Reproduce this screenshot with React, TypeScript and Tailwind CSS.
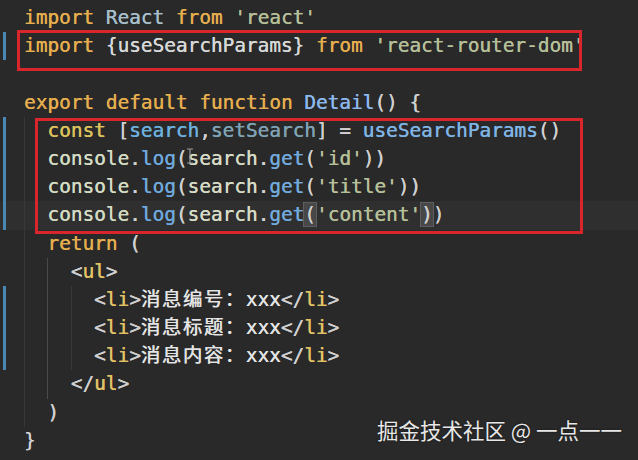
type Tok = [string, string];

const KW = "#e5ae4e";
const STR = "#b5bf98";
const PUN = "#cfcfcf";
const TAG = "#e2c267";
const FN = "#7fb4e4";

type Line = { indent: number; toks: Tok[]; bar?: boolean; active?: boolean };

const lines: Line[] = [
  { indent: 0, toks: [["import", KW], [" ", PUN], ["React", "#a6bfcb"], [" ", PUN], ["from", KW], [" ", PUN], ["'react'", STR]] },
  {
    indent: 0,
    bar: true,
    toks: [["import", KW], [" ", PUN], ["{useSearchParams}", "#d6d8d8"], [" ", PUN], ["from", KW], [" ", PUN], ["'react-router-dom'", STR]],
  },
  { indent: 0, toks: [] },
  {
    indent: 0,
    toks: [["export", KW], [" ", PUN], ["default", KW], [" ", PUN], ["function", KW], [" ", PUN], ["Detail", "#8cb8ec"], ["() {", PUN]],
  },
  {
    indent: 2,
    bar: true,
    toks: [
      ["const", "#dcc25c"],
      [" [", PUN],
      ["search", "#6cb0dd"],
      [",", PUN],
      ["setSearch", "#7fa3b5"],
      ["] = ", PUN],
      ["useSearchParams", FN],
      ["()", PUN],
    ],
  },
  {
    indent: 2,
    bar: true,
    toks: [["console", "#d3dbc3"], [".", PUN], ["log", "#6fa8dc"], ["(", PUN], ["search", "#d6dcc6"], [".", PUN], ["get", "#72aadd"], ["(", PUN], ["'id'", STR], ["))", PUN]],
  },
  {
    indent: 2,
    bar: true,
    toks: [["console", "#d3dbc3"], [".", PUN], ["log", "#6fa8dc"], ["(", PUN], ["search", "#d6dcc6"], [".", PUN], ["get", "#72aadd"], ["(", PUN], ["'title'", STR], ["))", PUN]],
  },
  {
    indent: 2,
    bar: true,
    active: true,
    toks: [["console", "#d3dbc3"], [".", PUN], ["log", "#6fa8dc"], ["(", PUN], ["search", "#d6dcc6"], [".", PUN], ["get", "#72aadd"], ["[(]", PUN], ["'content'", STR], ["[)]", PUN], [")", PUN]],
  },
  { indent: 2, toks: [["return", KW], [" (", PUN]] },
  { indent: 4, toks: [["<", PUN], ["ul", TAG], [">", PUN]] },
  { indent: 6, bar: true, toks: [["<", PUN], ["li", TAG], [">", PUN], ["消息编号：", "#e4e4e4"], ["xxx", "#e4e4e4"], ["</", PUN], ["li", TAG], [">", PUN]] },
  { indent: 6, bar: true, toks: [["<", PUN], ["li", TAG], [">", PUN], ["消息标题：", "#e4e4e4"], ["xxx", "#e4e4e4"], ["</", PUN], ["li", TAG], [">", PUN]] },
  { indent: 6, bar: true, toks: [["<", PUN], ["li", TAG], [">", PUN], ["消息内容：", "#e4e4e4"], ["xxx", "#e4e4e4"], ["</", PUN], ["li", TAG], [">", PUN]] },
  { indent: 4, toks: [["</", PUN], ["ul", TAG], [">", PUN]] },
  { indent: 2, toks: [[")", PUN]] },
  { indent: 0, toks: [["}", PUN]] },
];

const isCjk = (s: string) => /[\u3000-\u9fff\uff00-\uffef]/.test(s);

function Token({ t }: { t: Tok }) {
  const [text, color] = t;
  if (text === "[(]" || text === "[)]") {
    return (
      <span className="bg-[#474747] outline outline-1 outline-[#5e5e5e]" style={{ color }}>
        {text[1]}
      </span>
    );
  }
  return (
    <span className={isCjk(text) ? "tracking-[1.6px]" : ""} style={{ color }}>
      {text}
    </span>
  );
}

function CodeLine({ line, idx }: { line: Line; idx: number }) {
  const guides = Math.floor(line.indent / 2);
  return (
    <div className={`flex h-[28.2px] items-stretch ${line.active ? "bg-[#2f2f2f]" : ""}`}>
      <div className="w-[24px] shrink-0 pl-[3px]">
        {line.bar && <div className="h-full w-[3px] bg-[#4a87b5]" />}
      </div>
      <div className="flex items-stretch">
        {Array.from({ length: guides }).map((_, g) => (
          <span
            key={g}
            className={`w-[23.36px] border-l ${g === 1 && idx >= 9 ? "border-[#4a4a4a]" : "border-[#383838]"}`}
          />
        ))}
      </div>
      <div className="whitespace-pre leading-[28.2px] [text-shadow:0.35px_0_0_currentColor]">
        {line.toks.map((t, i) => (
          <Token key={i} t={t} />
        ))}
      </div>
    </div>
  );
}

export default function App() {
  return (
    <div className="relative h-[460px] w-[638px] overflow-hidden bg-[#292929]">
      <div
        className="flex flex-col pt-[4px] text-[19.4px]"
        style={{ fontFamily: '"DejaVu Sans Mono", "Noto Sans CJK SC", monospace' }}
      >
        {lines.map((l, i) => (
          <CodeLine key={i} line={l} idx={i} />
        ))}
      </div>

      {/* highlight boxes */}
      <div className="absolute left-[17px] top-[30px] h-[41px] w-[565px] border-[3px] border-[#d8262c]" />
      <div className="absolute left-[35px] top-[118px] h-[116px] w-[548px] border-[3px] border-[#d8262c]" />

      {/* mouse text cursor */}
      <svg className="absolute left-[186px] top-[148px]" width="8" height="16" viewBox="0 0 8 16">
        <path d="M1 1h6M4 1v14M1 15h6" stroke="#9a9a9a" strokeWidth="1.2" fill="none" />
      </svg>

      <div
        className="absolute left-[377px] top-[414px] text-[21.5px] text-[#e8e8e8] [text-shadow:0_0_2px_rgba(0,0,0,0.6)]"
        style={{ fontFamily: '"Noto Sans CJK SC", sans-serif' }}
      >
        掘金技术社区 @ 一点一一
      </div>
    </div>
  );
}
